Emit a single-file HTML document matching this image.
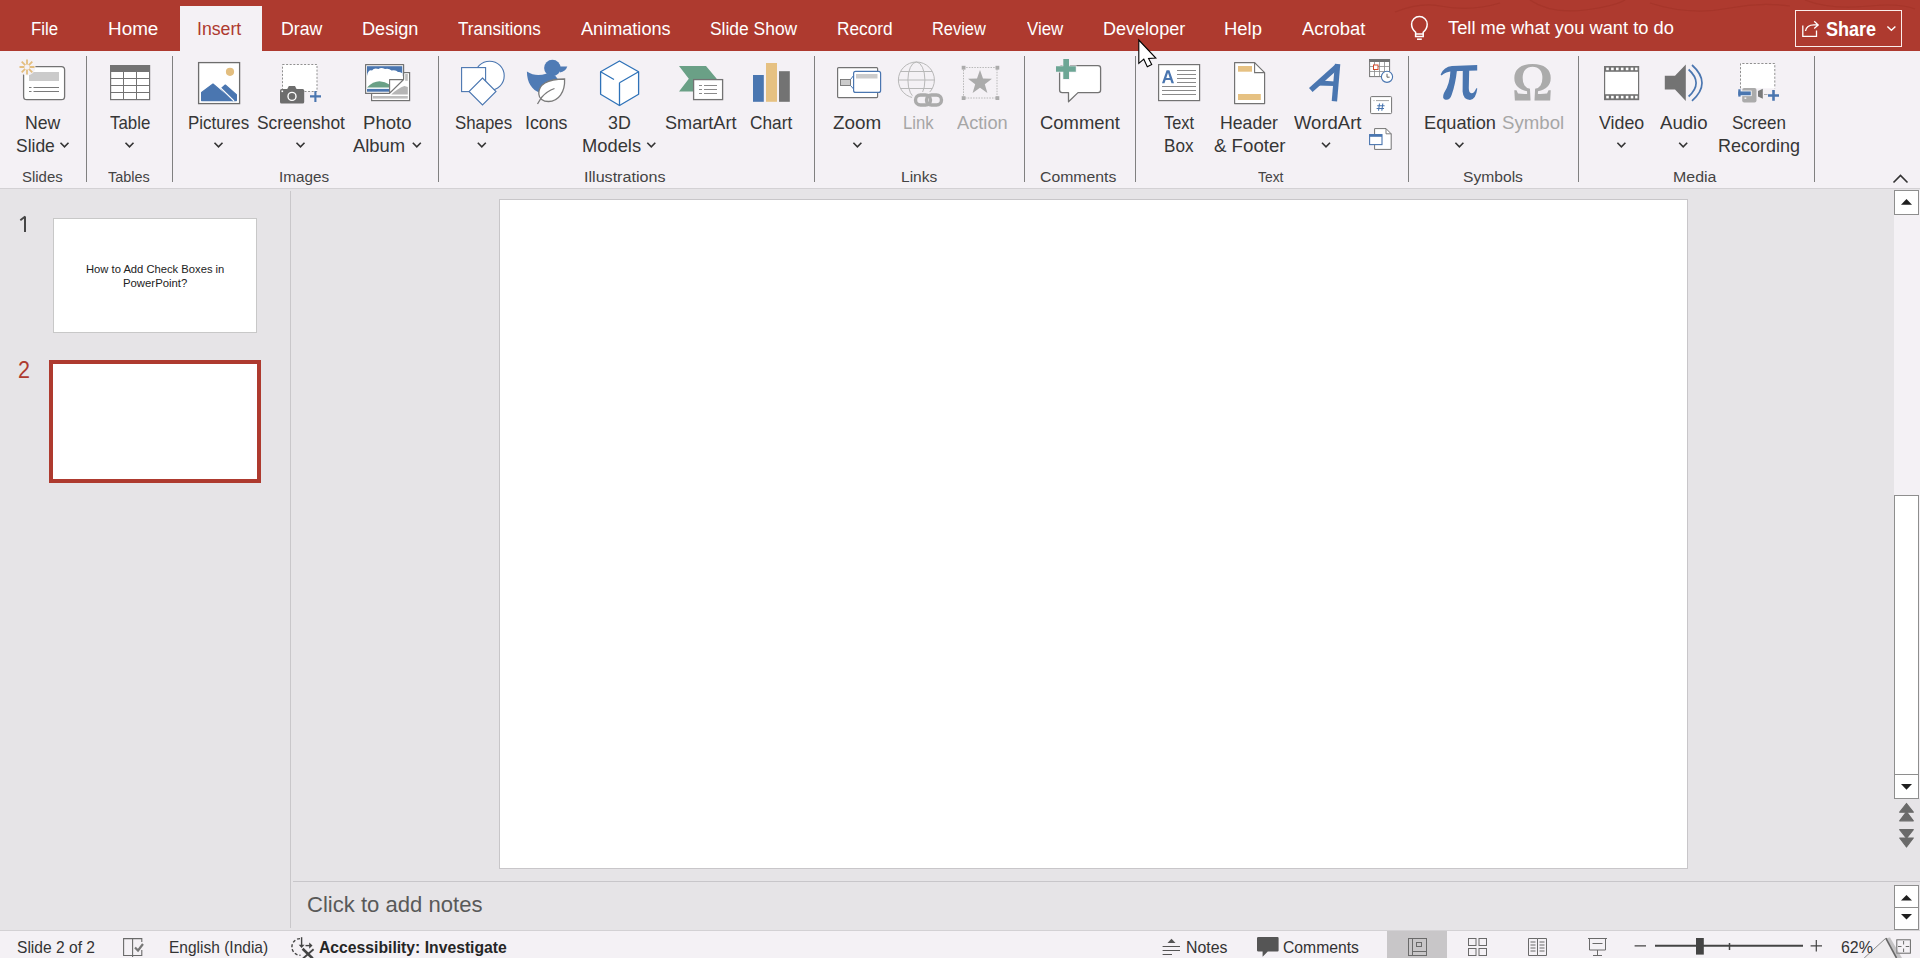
<!DOCTYPE html>
<html><head><meta charset="utf-8">
<style>
html,body{margin:0;padding:0;width:1920px;height:958px;overflow:hidden;background:#E6E4E7;font-family:"Liberation Sans",sans-serif;}
.t{position:absolute;white-space:nowrap;line-height:normal;transform-origin:0 0;}
.abs{position:absolute;}
</style></head><body>
<div class="abs" style="left:0;top:0;width:1920px;height:51px;background:#AE3A2F"></div>
<div class="abs" style="left:180px;top:6px;width:82px;height:45px;background:#F4F1F5"></div>
<div class="abs" style="left:0;top:51px;width:1920px;height:137px;background:#F4F1F5"></div>
<div class="abs" style="left:0;top:188px;width:1920px;height:1px;background:#D3D1D4"></div>
<div class="abs" style="left:1795px;top:10px;width:107px;height:37px;border:1px solid #FBEDEB;box-sizing:border-box"></div>
<!-- left pane separator -->
<div class="abs" style="left:290px;top:191px;width:1px;height:737px;background:#C9C7CA"></div>
<!-- thumbs -->
<div class="abs" style="left:53px;top:218px;width:204px;height:115px;background:#fff;border:1px solid #C8C8C8;box-sizing:border-box"></div>
<div class="abs" style="left:49px;top:360px;width:212px;height:123px;background:#fff;border:4px solid #AE3A2F;box-sizing:border-box"></div>
<!-- slide -->
<div class="abs" style="left:499px;top:199px;width:1189px;height:670px;background:#fff;border:1px solid #C8C6C9;box-sizing:border-box"></div>
<!-- notes -->
<div class="abs" style="left:293px;top:881px;width:1627px;height:1px;background:#C8C6CA"></div>
<!-- scrollbar -->
<div class="abs" style="left:1894px;top:190px;width:26px;height:608px;background:#F4F1F5"></div>
<div class="abs" style="left:1894px;top:190px;width:25px;height:25px;background:#fff;border:1px solid #8E8E8E;box-sizing:border-box"></div>
<div class="abs" style="left:1894px;top:495px;width:25px;height:280px;background:#fff;border:1px solid #8E8E8E;box-sizing:border-box"></div>
<div class="abs" style="left:1894px;top:774px;width:25px;height:25px;background:#fff;border:1px solid #8E8E8E;box-sizing:border-box"></div>
<div class="abs" style="left:1894px;top:885px;width:25px;height:23px;background:#fff;border:1px solid #8E8E8E;box-sizing:border-box"></div>
<div class="abs" style="left:1894px;top:907px;width:25px;height:23px;background:#fff;border:1px solid #8E8E8E;box-sizing:border-box"></div>
<!-- status bar -->
<div class="abs" style="left:0;top:930px;width:1920px;height:28px;background:#F4F1F5"></div>
<div class="abs" style="left:0;top:930px;width:1920px;height:1px;background:#D3D1D4"></div>
<div class="abs" style="left:1387px;top:931px;width:60px;height:27px;background:#C8C6C8"></div>
<svg class="abs" style="left:0;top:0" width="1920" height="958">
<defs>
<style>
.g{fill:none;stroke:#737373;stroke-width:1.2}
.sep{stroke:#808080;stroke-width:1}
.chev{fill:none;stroke:#333;stroke-width:1.6}
</style>
</defs>
<!-- thumb number 1 -->
<path d="M25 216.5 V231.9" stroke="#464646" stroke-width="2"/>
<path d="M20.3 220.3 L25.2 216.6" stroke="#464646" stroke-width="1.9"/>
<!-- faint doodles -->
<g fill="none" stroke="#A33428" stroke-width="1.2" opacity="0.7">
<path d="M1395 12 Q1420 2 1440 6 Q1470 12 1500 3"/>
<path d="M1530 0 Q1550 14 1585 10 Q1615 6 1625 0"/>
<path d="M1650 3 Q1690 16 1730 8 Q1760 2 1790 6"/>
<path d="M1805 0 Q1830 10 1870 6 Q1900 3 1915 9"/>
</g>
<!-- separators -->
<g class="sep">
<line x1="86.5" y1="56" x2="86.5" y2="182"/>
<line x1="172.5" y1="56" x2="172.5" y2="182"/>
<line x1="438.5" y1="56" x2="438.5" y2="182"/>
<line x1="814.5" y1="56" x2="814.5" y2="182"/>
<line x1="1024.5" y1="56" x2="1024.5" y2="182"/>
<line x1="1135.5" y1="56" x2="1135.5" y2="182"/>
<line x1="1408.5" y1="56" x2="1408.5" y2="182"/>
<line x1="1578.5" y1="56" x2="1578.5" y2="182"/>
<line x1="1814.5" y1="56" x2="1814.5" y2="182"/>
</g>
<!-- chevrons -->
<g class="chev">
<path d="M60.5 142.8 L64.5 146.8 L68.5 142.8"/>
<path d="M125.5 142.8 L129.5 146.8 L133.5 142.8"/>
<path d="M214.5 142.8 L218.5 146.8 L222.5 142.8"/>
<path d="M296.5 142.8 L300.5 146.8 L304.5 142.8"/>
<path d="M412.8 142.8 L416.8 146.8 L420.8 142.8"/>
<path d="M477.8 142.8 L481.8 146.8 L485.8 142.8"/>
<path d="M647.3 142.8 L651.3 146.8 L655.3 142.8"/>
<path d="M853.4 142.8 L857.4 146.8 L861.4 142.8"/>
<path d="M1322 142.8 L1326 146.8 L1330 142.8"/>
<path d="M1455.4 142.8 L1459.4 146.8 L1463.4 142.8"/>
<path d="M1617.4 142.8 L1621.4 146.8 L1625.4 142.8"/>
<path d="M1679.2 142.8 L1683.2 146.8 L1687.2 142.8"/>
<path d="M1893.5 182.5 L1900.5 175.5 L1907.5 182.5"/>
</g>

<!-- New Slide -->
<rect x="23.6" y="66.6" width="41" height="33" rx="3.2" fill="#fff" stroke="#737373" stroke-width="1.3"/>
<rect x="29" y="72" width="30" height="9" fill="#CBCBCB"/>
<path d="M29 87.5 H31.5 M33.5 87.5 H59 M29 91.5 H31.5 M33.5 91.5 H59" stroke="#7a7a7a" stroke-width="1"/>
<circle cx="27" cy="67" r="8.5" fill="#F4F1F5"/>
<g stroke="#E3BE7F" stroke-width="1.8"><path d="M27 59.5 V74.5 M19.5 67 H34.5 M21.7 61.7 L32.3 72.3 M21.7 72.3 L32.3 61.7"/></g>
<circle cx="27" cy="67" r="2.6" fill="#F4F1F5"/>

<!-- Table -->
<rect x="110.6" y="65.6" width="39" height="34" fill="#fff" stroke="#737373" stroke-width="1.2"/>
<rect x="110" y="65" width="40" height="7" fill="#737373"/>
<path d="M110.5 78.5 H149.5 M110.5 85.5 H149.5 M110.5 92.5 H149.5 M123.5 72 V99.5 M136.5 72 V99.5" stroke="#737373" stroke-width="1"/>

<!-- Pictures -->
<rect x="198.6" y="62.6" width="41" height="41" fill="#fff" stroke="#6d6d6d" stroke-width="1.3"/>
<circle cx="230" cy="71.8" r="4.1" fill="#E3BE7F"/>
<path d="M201.6 100.6 V92.6 L213 84 L232.6 100.6 Z" fill="#4A76B0" stroke="#4A76B0" stroke-width="1.2" stroke-linejoin="round"/>
<path d="M221.3 88.4 L225.3 85 L236.4 94.8 V100.6 H232.6 Z" fill="#4A76B0" stroke="#4A76B0" stroke-width="1.2" stroke-linejoin="round"/>
<path d="M220.2 87.4 L234 101" stroke="#fff" stroke-width="1.1"/>

<!-- Screenshot -->
<rect x="282.5" y="64.5" width="34.5" height="27" fill="#fff" stroke="#909090" stroke-width="1" stroke-dasharray="2 1.6"/>
<rect x="280" y="89" width="24.2" height="14.6" rx="1.6" fill="#6d6d6d"/>
<path d="M287 89.5 L288.8 86 H295 L296.8 89.5 Z" fill="#6d6d6d"/>
<circle cx="292" cy="96.4" r="4" fill="none" stroke="#fff" stroke-width="1.4"/>
<rect x="281.5" y="90.5" width="1.6" height="1.6" fill="#fff"/>
<path d="M315.4 91 V102 M310 96.4 H321" stroke="#4A76B0" stroke-width="2.1"/>

<!-- Photo Album -->
<rect x="371.6" y="72.6" width="38" height="28" fill="#fff" stroke="#737373" stroke-width="1.2"/>
<rect x="373" y="96" width="34.8" height="2.6" fill="#BDBDBD"/>
<rect x="405.2" y="74" width="2.6" height="6.8" fill="#BDBDBD"/>
<path d="M391.2 94.6 Q398 88 404.4 86 L407.8 87.1 V94.6 Z" fill="#B5B5B5"/>
<path d="M365.6 64.6 H403.6 V79.4 L389.4 93.4 H365.6 Z" fill="#fff" stroke="#737373" stroke-width="1.2" stroke-linejoin="round"/>
<rect x="367" y="66.2" width="35.3" height="10" fill="#4A76B0"/>
<path d="M367 76 Q368 69.5 372 70.5 Q374 67.5 378.5 69 Q381 66.8 385 69 Q389 68 391.5 70.5 Q396 69.5 398 72 Q401 71.5 402.4 73.5 V79 H367 Z" fill="#fff"/>
<path d="M367 87.4 Q373 81.2 379.5 81.2 Q385 81.5 389.4 84.5 V87.4 Z" fill="#6AA086"/>
<rect x="367" y="88.9" width="22.4" height="2.8" fill="#4A76B0"/>
<path d="M389.6 79.6 H403.4 L389.6 93.2 Z" fill="#fff" stroke="#737373" stroke-width="1.1" stroke-linejoin="round"/>

<!-- Shapes -->
<circle cx="489.6" cy="75.8" r="14.6" fill="#fff" stroke="#4A76B0" stroke-width="1.1"/>
<rect x="461.6" y="67.6" width="24" height="24" fill="#fff" stroke="#4A76B0" stroke-width="1.1"/>
<path d="M482.5 78 L496 91.5 L482.5 105 L469 91.5 Z" fill="#fff" stroke="#4A76B0" stroke-width="1.1"/>

<!-- Icons (duck + leaf) -->
<circle cx="552.4" cy="68" r="8.3" fill="#4F7BB5"/>
<path d="M559.5 66.6 H567.3 Q565.6 71.9 559.8 72.4 Z" fill="#4F7BB5"/>
<path d="M526.9 71.6 C533 75.8 540 75.8 546 73.8 L555 75.5 L557.6 78.8 L556 84 L540 93 C532 90 527 83 526.9 71.6 Z" fill="#4F7BB5"/>
<path d="M538.8 94 C538.5 84.5 547 79.2 564.6 79 C565.2 92 558.5 101.5 548.5 101.5 C543 101.5 539 98.5 538.8 94 Z" fill="#fff" stroke="#7a7a7a" stroke-width="1.3"/>
<path d="M537.5 104 L541.5 97.5 Q547 91 554.5 88.5" fill="none" stroke="#7a7a7a" stroke-width="1.3"/>

<!-- 3D Models -->
<path d="M619.5 61 L638.6 71.8 L638.6 94.2 L619.5 105.5 L600.6 94.2 L600.6 71.8 Z" fill="#fff" stroke="#2E72B8" stroke-width="1.3" stroke-linejoin="round"/>
<path d="M600.6 71.8 L614 79.5 M619.5 82.7 V105.5 M619.5 82.7 L638.6 71.8" fill="none" stroke="#2E72B8" stroke-width="1.3"/>

<!-- SmartArt -->
<path d="M679 66 H706 L716.7 78.8 L706 91.6 H679 L688.8 78.8 Z" fill="#6AA086"/>
<rect x="693.6" y="79.6" width="29" height="20" fill="#fff" stroke="#737373" stroke-width="1.3"/>
<path d="M699 85.5 H702 M704 85.5 H717 M699 89.5 H702 M704 89.5 H717 M699 93.5 H702 M704 93.5 H717" stroke="#8a8a8a" stroke-width="1"/>

<!-- Chart -->
<rect x="753" y="75" width="10.8" height="26.8" fill="#4A76B0"/>
<rect x="766" y="63" width="11" height="38.8" fill="#E6C182"/>
<rect x="779" y="71.2" width="10.8" height="30.6" fill="#737373"/>

<!-- Zoom -->
<rect x="837.6" y="67.6" width="40" height="30" rx="1" fill="#fff" stroke="#737373" stroke-width="1.2"/>
<rect x="853.6" y="71.4" width="27" height="21" rx="2" fill="#fff" stroke="#4A76B0" stroke-width="1.2"/>
<rect x="856" y="74" width="21.5" height="4.5" fill="#CBCBCB"/>
<rect x="840.5" y="79.5" width="10" height="6" fill="#CBCBCB" stroke="#737373" stroke-width="0.9"/>
<path d="M850.5 79.5 L853.6 75.5 M850.5 85.5 L853.6 89" stroke="#4A76B0" stroke-width="1"/>

<!-- Link -->
<g fill="none" stroke="#B8B8B8" stroke-width="1">
<circle cx="916.4" cy="80" r="18"/>
<ellipse cx="916.4" cy="80" rx="8.5" ry="18"/>
<path d="M898.4 80 H934.4 M900.5 71.5 H932.3 M900.5 88.5 H932.3"/>
</g>
<rect x="912" y="92" width="33" height="16" fill="#F4F1F5" rx="6"/>
<g fill="none" stroke="#ABABAB" stroke-width="3.4">
<rect x="915.5" y="95" width="15" height="10" rx="5"/>
<rect x="926.5" y="95" width="15" height="10" rx="5"/>
</g>

<!-- Action -->
<rect x="963.5" y="67.5" width="33.5" height="30.5" fill="none" stroke="#B8B8B8" stroke-width="1" stroke-dasharray="1.5 1.2"/>
<g fill="#ABABAB">
<rect x="961.7" y="65.8" width="3.8" height="3.8"/><rect x="995.5" y="65.8" width="3.8" height="3.8"/>
<rect x="961.7" y="96.2" width="3.8" height="3.8"/><rect x="995.5" y="96.2" width="3.8" height="3.8"/>
<path d="M980 70 L983 78.6 L992 78.8 L984.8 84.3 L987.4 93 L980 87.8 L972.6 93 L975.2 84.3 L968 78.8 L977 78.6 Z"/>
</g>

<!-- Comment -->
<path d="M1062.5 65.6 H1098 Q1100.6 65.6 1100.6 68.2 V90 Q1100.6 92.6 1098 92.6 H1078 L1068.5 101.8 V92.6 H1062.2 Q1059.6 92.6 1059.6 90 V68.2 Q1059.6 65.6 1062.5 65.6 Z" fill="#fff" stroke="#737373" stroke-width="1.3" stroke-linejoin="round"/>
<path d="M1063.3 59 H1069 V66.3 H1075.8 V71.8 H1069 V78.9 H1063.3 V71.8 H1056 V66.3 H1063.3 Z" fill="#6DA695" stroke="#F4F1F5" stroke-width="1.6" paint-order="stroke"/>

<!-- Text Box -->
<rect x="1158.6" y="64.6" width="41" height="36" fill="#fff" stroke="#737373" stroke-width="1.2"/>
<path d="M1162 83.2 L1166.6 70.2 H1169.4 L1174 83.2 H1171.5 L1170.4 80 H1165.6 L1164.5 83.2 Z M1166.3 77.9 H1169.7 L1168 72.8 Z" fill="#4A76B0" fill-rule="evenodd"/>
<path d="M1177 70.5 H1196 M1177 74.5 H1196 M1177 78.5 H1196 M1177 82.5 H1196 M1162 86.5 H1196 M1162 90.5 H1196 M1162 94.5 H1196" stroke="#8a8a8a" stroke-width="1"/>

<!-- Header & Footer -->
<path d="M1234.6 62.6 H1254.6 L1264.6 72.6 V103.6 H1234.6 Z" fill="#fff" stroke="#737373" stroke-width="1.2" stroke-linejoin="round"/>
<path d="M1254.6 62.6 V72.6 H1264.6" fill="none" stroke="#737373" stroke-width="1.1"/>
<rect x="1238" y="66" width="14" height="5.7" fill="#E6C182"/>
<rect x="1238" y="94" width="22.8" height="6" fill="#E6C182"/>

<!-- WordArt -->
<g stroke="#4A76B0" stroke-width="5.4" fill="none">
<path d="M1310.8 90 L1337 66.5"/>
<path d="M1337.6 64 L1334.4 101.3"/>
</g>
<path d="M1320 80.5 L1335 81.5 L1335 86 L1317 85.5 Z" fill="#4A76B0"/>

<!-- small Text group icons -->
<rect x="1369.6" y="59.6" width="20" height="17" fill="#fff" stroke="#737373" stroke-width="1"/>
<rect x="1369" y="59" width="21" height="3" fill="#737373"/>
<path d="M1369.5 66.5 H1389.5 M1369.5 71.5 H1389.5 M1374.5 62 V76.5 M1379.5 62 V76.5 M1384.5 62 V76.5" stroke="#8a8a8a" stroke-width="0.8"/>
<rect x="1373.5" y="65" width="4.5" height="4.5" fill="#fff" stroke="#D24726" stroke-width="1"/>
<circle cx="1387" cy="76.8" r="5.6" fill="#fff" stroke="#4A76B0" stroke-width="1.1"/>
<path d="M1387 73.8 V77.2 H1389.6" fill="none" stroke="#555" stroke-width="0.9"/>

<rect x="1370.6" y="96.6" width="21" height="17" rx="1" fill="#fff" stroke="#737373" stroke-width="1"/>
<path d="M1373.5 100.6 H1374.5 M1376 100.6 H1389" stroke="#8a8a8a" stroke-width="0.8"/>
<path d="M1379.5 103.5 L1378.5 110.8 M1382.8 103.5 L1381.8 110.8 M1377.2 105.8 H1384.6 M1376.6 108.5 H1384" stroke="#4A76B0" stroke-width="1.1"/>

<path d="M1374.6 128.6 H1386 L1391.2 133.8 V149.4 H1374.6 Z" fill="#fff" stroke="#737373" stroke-width="1" stroke-linejoin="round"/>
<path d="M1386 128.6 V133.8 H1391.2" fill="none" stroke="#737373" stroke-width="0.9"/>
<rect x="1369.6" y="134.6" width="12.4" height="10" fill="#fff" stroke="#4A76B0" stroke-width="1.1"/>
<rect x="1369.6" y="134.6" width="12.4" height="2.2" fill="#4A76B0"/>

<!-- Equation pi -->
<g fill="#4A76B0">
<path d="M1440.6 74.5 Q1444 66.5 1452 66 L1477.2 65 V70.6 L1452 71.2 Q1446 71.5 1441.5 75.5 Z"/>
<path d="M1450.5 70 Q1450 84 1444 93 Q1441.5 98.5 1445.5 99.8 Q1450 100.5 1451.8 94.5 Q1455.5 84 1457 70 Z"/>
<path d="M1462.8 70 L1462.6 91.5 Q1463.2 99.9 1470 99.9 Q1476 99.5 1477.3 88.5 L1476.2 88.2 Q1474.5 93.2 1471.5 93.2 Q1468.8 93.2 1468.8 88 L1469.2 70 Z"/>
</g>
<!-- Omega via text -->
<text x="1532.5" y="99.6" font-family="Liberation Serif" font-weight="bold" font-size="54" fill="#ABABAB" text-anchor="middle" textLength="41" lengthAdjust="spacingAndGlyphs">Ω</text>

<!-- Video -->
<rect x="1604.6" y="66.6" width="34" height="33" fill="#fff" stroke="#737373" stroke-width="1.2"/>
<rect x="1604" y="66" width="35" height="5.8" fill="#737373"/>
<rect x="1604" y="94.2" width="35" height="5.8" fill="#737373"/>
<g fill="#fff">
<rect x="1606.2" y="67.6" width="2.6" height="2.6"/><rect x="1611.1" y="67.6" width="2.6" height="2.6"/><rect x="1616" y="67.6" width="2.6" height="2.6"/><rect x="1620.9" y="67.6" width="2.6" height="2.6"/><rect x="1625.8" y="67.6" width="2.6" height="2.6"/><rect x="1630.7" y="67.6" width="2.6" height="2.6"/><rect x="1635.1" y="67.6" width="2.4" height="2.6"/>
<rect x="1606.2" y="95.8" width="2.6" height="2.6"/><rect x="1611.1" y="95.8" width="2.6" height="2.6"/><rect x="1616" y="95.8" width="2.6" height="2.6"/><rect x="1620.9" y="95.8" width="2.6" height="2.6"/><rect x="1625.8" y="95.8" width="2.6" height="2.6"/><rect x="1630.7" y="95.8" width="2.6" height="2.6"/><rect x="1635.1" y="95.8" width="2.4" height="2.6"/>
</g>

<!-- Audio -->
<path d="M1664.8 75.8 H1675 L1685.8 64.5 V101 L1675 89.5 H1664.8 Z" fill="#737373"/>
<path d="M1688.6 69.5 Q1703.6 83 1688.6 96.5 M1692 65 Q1712 83 1692 100.8" fill="none" stroke="#4A76B0" stroke-width="1.7"/>

<!-- Screen Recording -->
<rect x="1740.5" y="63.5" width="34.3" height="24.8" fill="#fff"/>
<path d="M1740.5 88.3 V63.5 H1774.8 V88.3" fill="none" stroke="#909090" stroke-width="1" stroke-dasharray="2.2 1.6"/>
<rect x="1742.2" y="88" width="14.3" height="14.6" rx="2" fill="#ABABAB"/>
<rect x="1744.5" y="97.5" width="1.8" height="1.3" fill="#fff"/>
<path d="M1758 91 L1762.8 88.8 V98.7 L1758 96.5 Z" fill="#7a7a7a"/>
<rect x="1737.6" y="90.6" width="14" height="5.5" fill="#fff"/>
<rect x="1738.3" y="91.4" width="12.5" height="3.9" fill="#4A76B0"/>
<rect x="1738.3" y="89.3" width="2.3" height="7.3" fill="#4A76B0"/>
<path d="M1764 94.5 H1767.5" stroke="#999" stroke-width="0.8"/>
<path d="M1773.5 90.1 V100.8 M1768 95.5 H1779" stroke="#4A76B0" stroke-width="2.6"/>

<!-- lightbulb -->
<g fill="none" stroke="#fff" stroke-width="1.5">
<path d="M1415.6 36.4 V32.2 Q1411.6 28.8 1411.6 24.2 A7.8 7.8 0 0 1 1427.2 24.2 Q1427.2 28.8 1423.2 32.2 V36.4 Z"/>
<path d="M1415.6 34 H1423.2"/>
<path d="M1417 39.2 H1421.8"/>
</g>
<!-- Share icon -->
<g fill="none" stroke="#fff" stroke-width="1.3">
<path d="M1802.8 25.5 V36.3 H1816.5 V30.5"/>
<path d="M1805.5 31 Q1806.5 24.8 1814 24.8 H1817.5 M1814.2 21.3 L1818.2 25 L1814.2 28.6"/>
</g>
<path d="M1887.4 26.5 L1891.4 30.3 L1895.4 26.5" fill="none" stroke="#fff" stroke-width="1.4"/>
<!-- cursor -->
<path d="M1138.8 40 V63.4 L1143.8 59.2 L1147.3 66.7 L1151.7 64.6 L1148.6 58.4 L1155.8 58 Z" fill="#fff" stroke="#000" stroke-width="1.1" stroke-linejoin="miter"/>

<!-- scroll arrows -->
<path d="M1901 204.8 L1906.5 199 L1912 204.8 Z" fill="#1f1f1f"/>
<path d="M1901 784 L1906.5 789.8 L1912 784 Z" fill="#1f1f1f"/>
<path d="M1901 900.5 L1906.5 895 L1912 900.5 Z" fill="#1f1f1f"/>
<path d="M1901 914 L1906.5 919.5 L1912 914 Z" fill="#1f1f1f"/>
<g fill="#6a6a6a">
<path d="M1906.5 803.5 L1913.3 812.2 H1899.7 Z" stroke="#6a6a6a" stroke-width="1.2" stroke-linejoin="round"/><path d="M1906.5 811.8 L1913.3 820.8 H1899.7 Z" stroke="#6a6a6a" stroke-width="1.2" stroke-linejoin="round"/>
<path d="M1906.5 838.2 L1913.3 829.6 H1899.7 Z" stroke="#6a6a6a" stroke-width="1.2" stroke-linejoin="round"/><path d="M1906.5 847 L1913.3 838 H1899.7 Z" stroke="#6a6a6a" stroke-width="1.2" stroke-linejoin="round"/>
</g>

<!-- status bar icons -->
<g fill="none" stroke="#6a6a6a" stroke-width="1.1">
<path d="M123.6 938.6 H132.6 V955.5 H123.6 Z M132.6 938.6 H141.8 V942 M141.8 950 V955.5 H132.6 V957"/>
</g>
<path d="M135 947.5 L138 950.5 L143 944" fill="none" stroke="#777" stroke-width="2.2"/>
<!-- accessibility -->
<g fill="none" stroke="#444" stroke-width="1.4">
<path d="M300 938.6 A8.3 8.3 0 0 0 300.5 955.3" stroke-dasharray="3 2"/>
<path d="M301.6 937.2 V945"/>
<path d="M305.5 945.6 H309.8"/>
</g>
<path d="M298.7 944.8 H304.6 L301.6 947.9 Z" fill="#444"/>
<path d="M309.2 942.6 L312.5 945.6 L309.2 948.7 Z" fill="#444"/>
<path d="M302.6 948.8 L312.7 958.5" stroke="#444" stroke-width="2.6"/>
<path d="M313.6 949.3 L303 958.5" stroke="#444" stroke-width="1.8"/>
<!-- notes icon -->
<g stroke="#555" stroke-width="1">
<path d="M1162.6 946.5 H1180 M1162.6 950.5 H1180 M1162.6 954.5 H1172"/>
</g>
<path d="M1167.5 943 L1171.5 938.8 L1175.5 943 Z" fill="#555"/>
<!-- comments icon -->
<path d="M1258.5 937 H1277.5 Q1278.6 937 1278.6 938 V950.5 Q1278.6 951.5 1277.5 951.5 H1267.8 L1262.6 956.8 V951.5 H1258.5 Q1257 951.5 1257 950.5 V938 Q1257 937 1258.5 937 Z" fill="#555"/>
<!-- normal view icon -->
<g fill="none" stroke="#6a6a6a" stroke-width="1">
<rect x="1408.5" y="938.5" width="18" height="17"/>
<path d="M1412.5 938.5 V955.5 M1412.5 951.5 H1426.5"/>
<rect x="1416.5" y="942.5" width="5" height="4"/>
</g>
<!-- slide sorter -->
<g fill="none" stroke="#6a6a6a" stroke-width="1">
<rect x="1468.5" y="938.5" width="7.5" height="7"/><rect x="1479" y="938.5" width="7.5" height="7"/>
<rect x="1468.5" y="948.5" width="7.5" height="7"/><rect x="1479" y="948.5" width="7.5" height="7"/>
</g>
<!-- reading view -->
<g fill="none" stroke="#6a6a6a" stroke-width="1">
<path d="M1528.5 938.5 H1537.5 V955.5 H1528.5 Z M1537.5 938.5 H1546.5 V955.5 H1537.5"/>
<path d="M1530.5 942 H1535.5 M1530.5 945 H1535.5 M1530.5 948 H1535.5 M1530.5 951 H1535.5 M1539.5 942 H1544.5 M1539.5 945 H1544.5 M1539.5 948 H1544.5 M1539.5 951 H1544.5"/>
</g>
<!-- slideshow -->
<g fill="none" stroke="#6a6a6a" stroke-width="1">
<path d="M1588 938.5 H1607 M1589.5 938.5 V950 H1605.5 V938.5 M1597.5 950 V955 M1593 955.5 H1602 M1592.5 943.5 H1602.5"/>
</g>
<!-- zoom slider -->
<path d="M1634.6 945.8 H1646 M1810.6 945.8 H1822 M1816.3 940 V951.6" stroke="#444" stroke-width="1.2"/>
<path d="M1655 945.8 H1803" stroke="#444" stroke-width="2"/>
<rect x="1696" y="938" width="7.8" height="16.6" fill="#444"/>
<path d="M1729.5 943 V950" stroke="#444" stroke-width="1.5"/>
<!-- fit icon -->
<g fill="none" stroke="#6a6a6a" stroke-width="1">
<rect x="1896.8" y="939.8" width="13.6" height="13.4"/>
<path d="M1903.6 941 V944.5 M1903.6 948.5 V952 M1898 946.5 H1901.5 M1905.7 946.5 H1909.2"/>
</g>
<!-- dog-ear artifact -->
<path d="M1864.2 958 L1885.8 938.2 L1896.5 958 Z" fill="#EEECEE"/>
<path d="M1885.8 938.2 L1890 937.5 L1902 958 H1896.5 Z" fill="#9a9a9a" opacity="0.55"/>
<path d="M1885.8 938.2 L1896.5 958" stroke="#666" stroke-width="1.6"/>
<path d="M1864.2 958 L1885.8 938.2" stroke="#8a8a8a" stroke-width="1"/>
</svg>

<div class="t" style="left:30.55px;top:17.78px;font-size:18.8px;color:#ffffff;font-weight:normal;transform:scaleX(0.8955);">File</div>
<div class="t" style="left:108.49px;top:17.78px;font-size:18.8px;color:#ffffff;font-weight:normal;transform:scaleX(1.0052);">Home</div>
<div class="t" style="left:281.08px;top:17.78px;font-size:18.8px;color:#ffffff;font-weight:normal;transform:scaleX(0.9435);">Draw</div>
<div class="t" style="left:362.30px;top:17.78px;font-size:18.8px;color:#ffffff;font-weight:normal;transform:scaleX(0.9643);">Design</div>
<div class="t" style="left:457.66px;top:17.78px;font-size:18.8px;color:#ffffff;font-weight:normal;transform:scaleX(0.9087);">Transitions</div>
<div class="t" style="left:581.00px;top:17.78px;font-size:18.8px;color:#ffffff;font-weight:normal;transform:scaleX(0.9642);">Animations</div>
<div class="t" style="left:710.22px;top:17.78px;font-size:18.8px;color:#ffffff;font-weight:normal;transform:scaleX(0.9276);">Slide Show</div>
<div class="t" style="left:837.37px;top:17.78px;font-size:18.8px;color:#ffffff;font-weight:normal;transform:scaleX(0.9196);">Record</div>
<div class="t" style="left:932.44px;top:17.78px;font-size:18.8px;color:#ffffff;font-weight:normal;transform:scaleX(0.8727);">Review</div>
<div class="t" style="left:1027.42px;top:17.78px;font-size:18.8px;color:#ffffff;font-weight:normal;transform:scaleX(0.8989);">View</div>
<div class="t" style="left:1103.06px;top:17.78px;font-size:18.8px;color:#ffffff;font-weight:normal;transform:scaleX(0.9601);">Developer</div>
<div class="t" style="left:1223.82px;top:17.78px;font-size:18.8px;color:#ffffff;font-weight:normal;transform:scaleX(0.9814);">Help</div>
<div class="t" style="left:1301.70px;top:17.78px;font-size:18.8px;color:#ffffff;font-weight:normal;transform:scaleX(0.9788);">Acrobat</div>
<div class="t" style="left:197.41px;top:17.78px;font-size:18.8px;color:#AE3A2F;font-weight:normal;transform:scaleX(0.9422);">Insert</div>
<div class="t" style="left:1447.63px;top:16.98px;font-size:18.8px;color:#ffffff;font-weight:normal;transform:scaleX(0.9746);">Tell me what you want to do</div>
<div class="t" style="left:1826.46px;top:17.89px;font-size:20px;color:#ffffff;font-weight:bold;transform:scaleX(0.9024);">Share</div>
<div class="t" style="left:25.34px;top:111.65px;font-size:18.5px;color:#363636;font-weight:normal;transform:scaleX(0.9547);">New</div>
<div class="t" style="left:110.41px;top:111.65px;font-size:18.5px;color:#363636;font-weight:normal;transform:scaleX(0.9125);">Table</div>
<div class="t" style="left:188.14px;top:111.65px;font-size:18.5px;color:#363636;font-weight:normal;transform:scaleX(0.9164);">Pictures</div>
<div class="t" style="left:257.22px;top:111.65px;font-size:18.5px;color:#363636;font-weight:normal;transform:scaleX(0.9396);">Screenshot</div>
<div class="t" style="left:363.01px;top:111.65px;font-size:18.5px;color:#363636;font-weight:normal;transform:scaleX(1.0040);">Photo</div>
<div class="t" style="left:454.74px;top:111.65px;font-size:18.5px;color:#363636;font-weight:normal;transform:scaleX(0.9104);">Shapes</div>
<div class="t" style="left:525.15px;top:111.65px;font-size:18.5px;color:#363636;font-weight:normal;transform:scaleX(0.9606);">Icons</div>
<div class="t" style="left:608.04px;top:111.65px;font-size:18.5px;color:#363636;font-weight:normal;transform:scaleX(0.9653);">3D</div>
<div class="t" style="left:665.43px;top:111.65px;font-size:18.5px;color:#363636;font-weight:normal;transform:scaleX(0.9796);">SmartArt</div>
<div class="t" style="left:750.39px;top:111.65px;font-size:18.5px;color:#363636;font-weight:normal;transform:scaleX(0.9329);">Chart</div>
<div class="t" style="left:833.43px;top:111.65px;font-size:18.5px;color:#363636;font-weight:normal;transform:scaleX(1.0197);">Zoom</div>
<div class="t" style="left:1040.33px;top:111.65px;font-size:18.5px;color:#363636;font-weight:normal;transform:scaleX(0.9957);">Comment</div>
<div class="t" style="left:1163.92px;top:111.65px;font-size:18.5px;color:#363636;font-weight:normal;transform:scaleX(0.8834);">Text</div>
<div class="t" style="left:1220.33px;top:111.65px;font-size:18.5px;color:#363636;font-weight:normal;transform:scaleX(0.9561);">Header</div>
<div class="t" style="left:1293.71px;top:111.65px;font-size:18.5px;color:#363636;font-weight:normal;transform:scaleX(0.9993);">WordArt</div>
<div class="t" style="left:1424.04px;top:111.65px;font-size:18.5px;color:#363636;font-weight:normal;transform:scaleX(0.9844);">Equation</div>
<div class="t" style="left:1599.11px;top:111.65px;font-size:18.5px;color:#363636;font-weight:normal;transform:scaleX(0.9619);">Video</div>
<div class="t" style="left:1660.20px;top:111.65px;font-size:18.5px;color:#363636;font-weight:normal;transform:scaleX(1.0059);">Audio</div>
<div class="t" style="left:1731.93px;top:111.65px;font-size:18.5px;color:#363636;font-weight:normal;transform:scaleX(0.9201);">Screen</div>
<div class="t" style="left:903.17px;top:111.65px;font-size:18.5px;color:#A6A6A6;font-weight:normal;transform:scaleX(0.9009);">Link</div>
<div class="t" style="left:956.75px;top:111.65px;font-size:18.5px;color:#A6A6A6;font-weight:normal;transform:scaleX(0.9855);">Action</div>
<div class="t" style="left:1502.16px;top:111.65px;font-size:18.5px;color:#A6A6A6;font-weight:normal;transform:scaleX(1.0072);">Symbol</div>
<div class="t" style="left:15.71px;top:135.25px;font-size:18.5px;color:#363636;font-weight:normal;transform:scaleX(0.9431);">Slide</div>
<div class="t" style="left:353.00px;top:135.25px;font-size:18.5px;color:#363636;font-weight:normal;transform:scaleX(0.9952);">Album</div>
<div class="t" style="left:581.53px;top:135.25px;font-size:18.5px;color:#363636;font-weight:normal;transform:scaleX(0.9907);">Models</div>
<div class="t" style="left:1163.63px;top:135.25px;font-size:18.5px;color:#363636;font-weight:normal;transform:scaleX(0.9257);">Box</div>
<div class="t" style="left:1213.85px;top:135.25px;font-size:18.5px;color:#363636;font-weight:normal;transform:scaleX(1.0082);">&amp; Footer</div>
<div class="t" style="left:1717.56px;top:135.25px;font-size:18.5px;color:#363636;font-weight:normal;transform:scaleX(0.9720);">Recording</div>
<div class="t" style="left:21.83px;top:167.90px;font-size:15.3px;color:#444444;font-weight:normal;transform:scaleX(0.9761);">Slides</div>
<div class="t" style="left:107.71px;top:167.90px;font-size:15.3px;color:#444444;font-weight:normal;transform:scaleX(0.9452);">Tables</div>
<div class="t" style="left:279.12px;top:167.90px;font-size:15.3px;color:#444444;font-weight:normal;transform:scaleX(0.9996);">Images</div>
<div class="t" style="left:584.05px;top:167.90px;font-size:15.3px;color:#444444;font-weight:normal;transform:scaleX(1.0529);">Illustrations</div>
<div class="t" style="left:900.51px;top:167.90px;font-size:15.3px;color:#444444;font-weight:normal;transform:scaleX(1.0157);">Links</div>
<div class="t" style="left:1040.46px;top:167.90px;font-size:15.3px;color:#444444;font-weight:normal;transform:scaleX(1.0320);">Comments</div>
<div class="t" style="left:1258.47px;top:167.90px;font-size:15.3px;color:#444444;font-weight:normal;transform:scaleX(0.9053);">Text</div>
<div class="t" style="left:1462.60px;top:167.90px;font-size:15.3px;color:#444444;font-weight:normal;transform:scaleX(1.0217);">Symbols</div>
<div class="t" style="left:1672.52px;top:167.90px;font-size:15.3px;color:#444444;font-weight:normal;transform:scaleX(1.0428);">Media</div>
<div class="t" style="left:18.02px;top:356.98px;font-size:23px;color:#AE3A2F;font-weight:normal;transform:scaleX(0.9365);">2</div>
<div class="t" style="left:85.60px;top:263.10px;font-size:10.6px;color:#222222;font-weight:normal;transform:scaleX(1.0583);">How to Add Check Boxes in</div>
<div class="t" style="left:122.69px;top:277.30px;font-size:10.6px;color:#222222;font-weight:normal;transform:scaleX(1.0699);">PowerPoint?</div>
<div class="t" style="left:306.90px;top:891.25px;font-size:22.7px;color:#595959;font-weight:normal;transform:scaleX(0.9729);">Click to add notes</div>
<div class="t" style="left:17.00px;top:938.59px;font-size:15.7px;color:#333333;font-weight:normal;transform:scaleX(0.9934);">Slide 2 of 2</div>
<div class="t" style="left:169.46px;top:938.59px;font-size:15.7px;color:#333333;font-weight:normal;transform:scaleX(0.9885);">English (India)</div>
<div class="t" style="left:318.61px;top:938.59px;font-size:15.7px;color:#262626;font-weight:bold;transform:scaleX(1.0018);">Accessibility: Investigate</div>
<div class="t" style="left:1186.33px;top:938.59px;font-size:15.7px;color:#333333;font-weight:normal;transform:scaleX(1.0109);">Notes</div>
<div class="t" style="left:1282.71px;top:938.59px;font-size:15.7px;color:#333333;font-weight:normal;transform:scaleX(1.0017);">Comments</div>
<div class="t" style="left:1840.70px;top:938.59px;font-size:15.7px;color:#333333;font-weight:normal;transform:scaleX(1.0145);">62%</div>
</body></html>
